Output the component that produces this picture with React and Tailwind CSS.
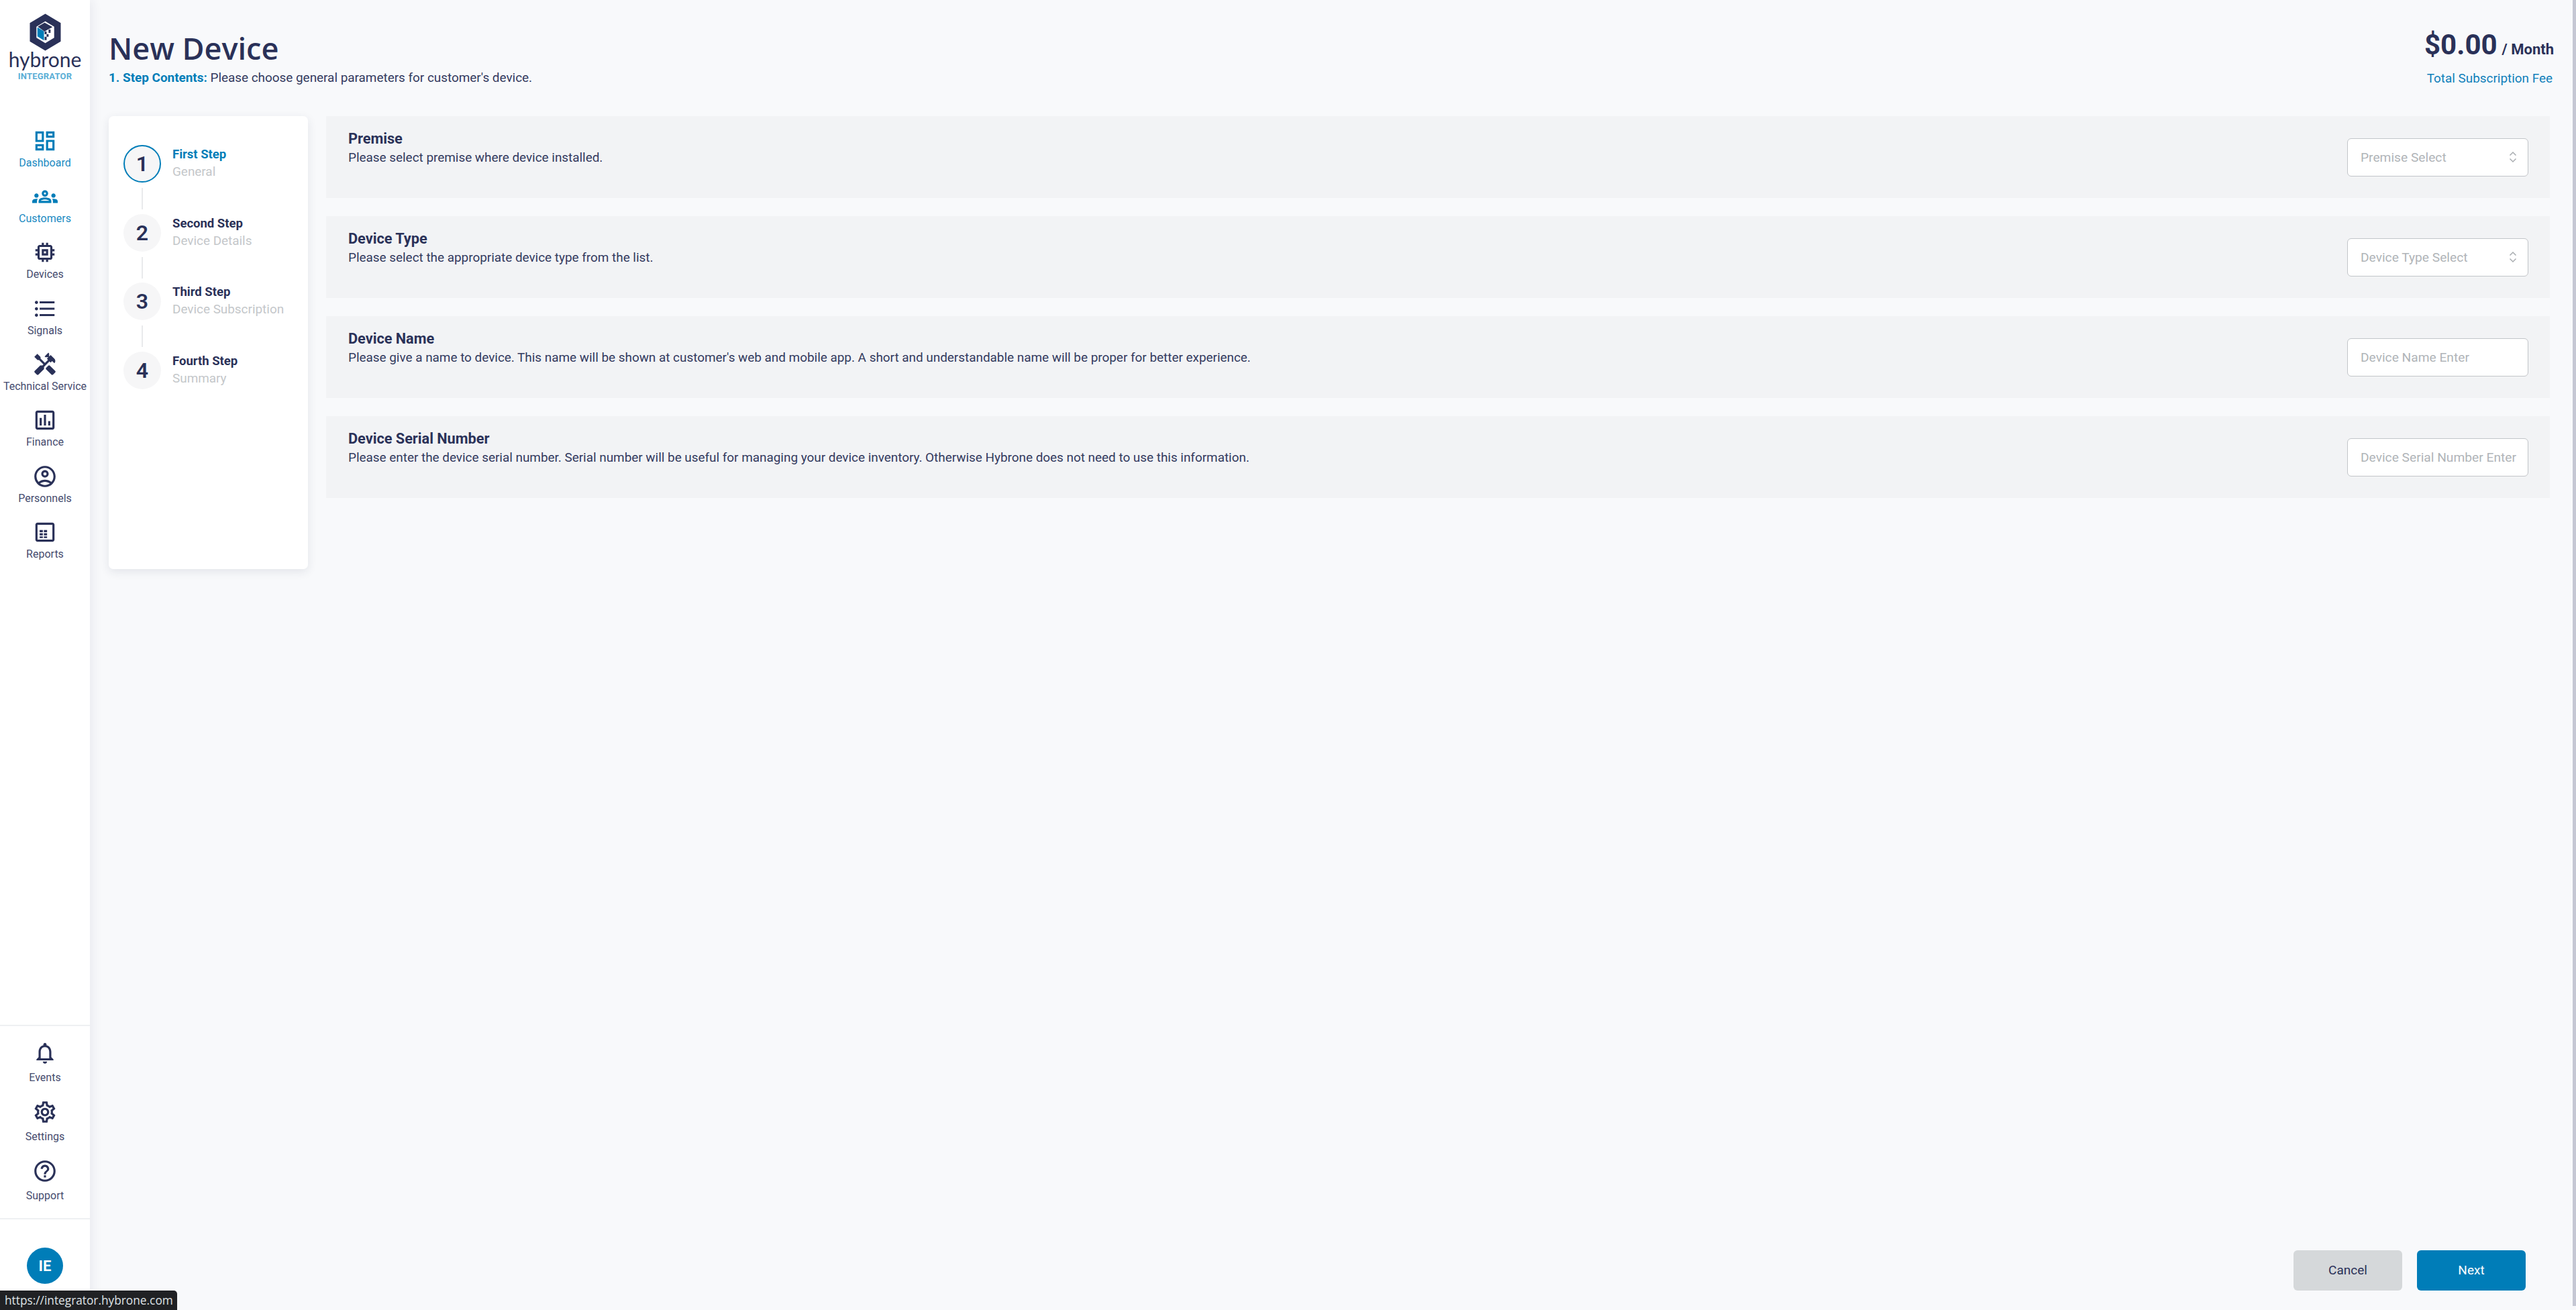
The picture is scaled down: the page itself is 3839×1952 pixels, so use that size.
import {
  MdOutlineDashboard,
  MdOutlineGroups,
  MdOutlineMemory,
  MdFormatListBulleted,
  MdHandyman,
  MdOutlineAssessment,
  MdOutlineAccountCircle,
  MdOutlineNotifications,
  MdOutlineSettings,
  MdOutlineHelpOutline,
} from "react-icons/md"

function ReportsIcon({ className }) {
  return (
    <svg viewBox="0 0 24 24" fill="currentColor" className={className}>
      <path d="M19 3H5c-1.1 0-2 .9-2 2v14c0 1.1.9 2 2 2h14c1.1 0 2-.9 2-2V5c0-1.100-.9-2-2-2zm0 16H5V5h14v14z" />
      <path d="M7 10h3v2H7zM11 10h3v2h-3zM7 13h3v2H7zM11 13h3v2h-3zM7 16h3v1.500H7zM11 16h3v1.500h-3z" />
    </svg>
  )
}

function Logo() {
  return (
    <svg viewBox="0 0 48 56" className="w-[47px] h-[56px]">
      <path d="M24 0 47.500 14v28L24 56 .5 42V14z" fill="#2a3158" />
      <path d="M24 11.500 37.500 19.500v17L24 44.500 10.500 36.500v-17z" fill="#fff" />
      <path d="M12 20.500 22 26.500v14l-10-6z" fill="#007db8" />
      <path d="M12.500 19.500 23 13.500l12 6.500-4 2.500-1 .5-3 1.500-4 2.500z" fill="#2a3158" />
      <path d="M23 27h3v4h-3zM26 31h3v4h-3zM29 24h3v5h-3zM23 35h3v5h-3z" fill="#2a3158" />
    </svg>
  )
}

const mainNav = [
  { label: "Dashboard", icon: MdOutlineDashboard, active: true },
  { label: "Customers", icon: MdOutlineGroups, active: true },
  { label: "Devices", icon: MdOutlineMemory },
  { label: "Signals", icon: MdFormatListBulleted },
  { label: "Technical Service", icon: MdHandyman },
  { label: "Finance", icon: MdOutlineAssessment },
  { label: "Personnels", icon: MdOutlineAccountCircle },
  { label: "Reports", icon: ReportsIcon },
]

const bottomNav = [
  { label: "Events", icon: MdOutlineNotifications },
  { label: "Settings", icon: MdOutlineSettings },
  { label: "Support", icon: MdOutlineHelpOutline },
]

const steps = [
  { title: "First Step", sub: "General" },
  { title: "Second Step", sub: "Device Details" },
  { title: "Third Step", sub: "Device Subscription" },
  { title: "Fourth Step", sub: "Summary" },
]

const fields = [
  {
    title: "Premise",
    desc: "Please select premise where device installed.",
    placeholder: "Premise Select",
    select: true,
  },
  {
    title: "Device Type",
    desc: "Please select the appropriate device type from the list.",
    placeholder: "Device Type Select",
    select: true,
  },
  {
    title: "Device Name",
    desc: "Please give a name to device. This name will be shown at customer's web and mobile app. A short and understandable name will be proper for better experience.",
    placeholder: "Device Name Enter",
  },
  {
    title: "Device Serial Number",
    desc: "Please enter the device serial number. Serial number will be useful for managing your device inventory. Otherwise Hybrone does not need to use this information.",
    placeholder: "Device Serial Number Enter",
  },
]

function NavItem({ item, className }) {
  const Icon = item.icon
  return (
    <div
      className={
        "flex flex-col items-center whitespace-nowrap " +
        className +
        (item.active ? " text-[#007db8]" : " text-[#2a3158]")
      }
    >
      <Icon className="w-[38px] h-[38px] shrink-0" />
      <span
        className={
          "text-[16px] leading-[20px] " +
          (item.active ? "text-[#1a8ac2]" : "text-[#454b6e]")
        }
      >
        {item.label}
      </span>
    </div>
  )
}

function Sidebar() {
  return (
    <aside className="w-[134px] h-full shrink-0 bg-white flex flex-col shadow-[4px_0_14px_rgba(40,45,80,0.07)] z-10">
      <div className="flex flex-col items-center pt-[20px] h-[190.500px] shrink-0">
        <Logo />
        <div className="mt-[-3px] text-[30px] leading-[30px] font-normal text-[#2a3158] font-['Lato',sans-serif]">
          hybrone
        </div>
        <div className="mt-[3px] text-[13px] leading-[15px] font-bold tracking-[0.2px] text-[#5aaed6]">
          INTEGRATOR
        </div>
      </div>
      <nav className="flex flex-col">
        {mainNav.map((item) => (
          <NavItem key={item.label} item={item} className="h-[83.400px] gap-[4px]" />
        ))}
      </nav>
      <div className="mt-auto border-t-2 border-[#eef0f2] h-[288px] pt-[21px] shrink-0">
        {bottomNav.map((item) => (
          <NavItem key={item.label} item={item} className="h-[88px] gap-[8px]" />
        ))}
      </div>
      <div className="border-t-2 border-[#eef0f2] h-[137px] pt-[42px] shrink-0 flex justify-center">
        <div className="w-[54px] h-[54px] rounded-full bg-[#007db8] text-white font-bold text-[22px] flex items-center justify-center">
          IE
        </div>
      </div>
    </aside>
  )
}

function Stepper() {
  return (
    <div className="w-[297px] h-[675px] shrink-0 bg-white rounded-[7px] shadow-[0_4px_14px_rgba(40,45,80,0.10)] pt-[43px] pl-[22px]">
      {steps.map((step, i) => (
        <div key={step.title} className="relative flex h-[102.500px]">
          <div
            className={
              "w-[56px] h-[56px] rounded-full bg-[#f6f6f7] flex items-center justify-center text-[32px] font-semibold text-[#2a3158] " +
              (i === 0 ? "border-2 border-[#007db8]" : "")
            }
          >
            {i + 1}
          </div>
          {i < 3 && (
            <div className="absolute left-[27px] top-[64px] w-[2px] h-[32px] bg-[#e9eaec]" />
          )}
          <div className="ml-[17px] mt-[1px]">
            <div
              className={
                "text-[18.500px] leading-[26px] font-bold " +
                (i === 0 ? "text-[#007db8]" : "text-[#2a3158]")
              }
            >
              {step.title}
            </div>
            <div className="text-[18.900px] leading-[26px] text-[#c4c7ca]">{step.sub}</div>
          </div>
        </div>
      ))}
    </div>
  )
}

function Chevrons() {
  return (
    <svg viewBox="0 0 12 18" className="w-[12px] h-[18px] text-[#a9adb1]" fill="none" stroke="currentColor" strokeWidth="1.500">
      <path d="M1.500 6.500 6 2l4.500 4.500M1.500 11.500 6 16l4.500-4.500" />
    </svg>
  )
}

function FieldRow({ field }) {
  return (
    <div className="h-[122px] bg-[#f2f3f5] flex items-center justify-between pl-[33px] pr-[32px]">
      <div className="self-start pt-[20px]">
        <div className="text-[21.700px] leading-[28px] font-bold text-[#2a3158]">{field.title}</div>
        <div className="mt-[1px] text-[18.900px] leading-[26px] text-[#333a5e]">{field.desc}</div>
      </div>
      <div className="w-[270px] h-[57px] bg-white border border-[#c2c5c9] rounded-[6px] flex items-center justify-between pl-[19px] pr-[16px]">
        <span className="pt-[2px] text-[19.200px] text-[#b0b4b8] whitespace-nowrap">{field.placeholder}</span>
        {field.select && <Chevrons />}
      </div>
    </div>
  )
}

export default function App() {
  return (
    <div className="relative w-[3839px] h-[1952px] overflow-hidden flex bg-[#f8f9fb] font-['Roboto',sans-serif]">
      <Sidebar />

      <main className="flex-1 flex flex-col pl-[28px] pr-[33px]">
        <header className="h-[173px] shrink-0 flex justify-between">
          <div className="pt-[42px]">
            <h1 className="text-[45px] leading-[60px] font-semibold text-[#2a3158] font-['Open_Sans',sans-serif]">
              New Device
            </h1>
            <p className="mt-[2px] text-[18.900px] leading-[24px] text-[#333a5e]">
              <span className="font-bold text-[#007db8]">1. Step Contents:</span> Please choose general parameters for customer's device.
            </p>
          </div>
          <div className="pt-[37px] text-right">
            <div className="text-[#2a3158] font-bold whitespace-nowrap">
              <span className="text-[42px] leading-[60px]">$0.00</span>
              <span className="text-[22px] leading-[60px] ml-[7px]">/ Month</span>
            </div>
            <div className="mr-[2px] text-[18.900px] leading-[26px] text-[#0f7fba]">
              Total Subscription Fee
            </div>
          </div>
        </header>

        <div className="flex gap-[27px] pr-[6px]">
          <Stepper />
          <div className="flex-1 flex flex-col gap-[27px]">
            {fields.map((field) => (
              <FieldRow key={field.title} field={field} />
            ))}
          </div>
        </div>

        <div className="mt-auto mb-[29px] pr-[42px] flex justify-end gap-[22px]">
          <button className="w-[162px] h-[60px] rounded-[6px] bg-[#d5d8da] text-[#2a3158] text-[19px]">Cancel</button>
          <button className="w-[162px] h-[60px] rounded-[6px] bg-[#007db8] text-white text-[19px]">Next</button>
        </div>
      </main>

      <div className="absolute right-0 top-0 w-[5px] h-[1946px] bg-[#c5c7d3]" />
      <div className="absolute left-0 bottom-0 h-[29px] w-[264px] bg-[#202124] rounded-tr-[5px] z-20 pl-[7px] text-[17.300px] leading-[29px] text-[#dfe1e5] whitespace-nowrap font-['Open_Sans',sans-serif]">
        https://integrator.hybrone.com
      </div>
    </div>
  )
}
